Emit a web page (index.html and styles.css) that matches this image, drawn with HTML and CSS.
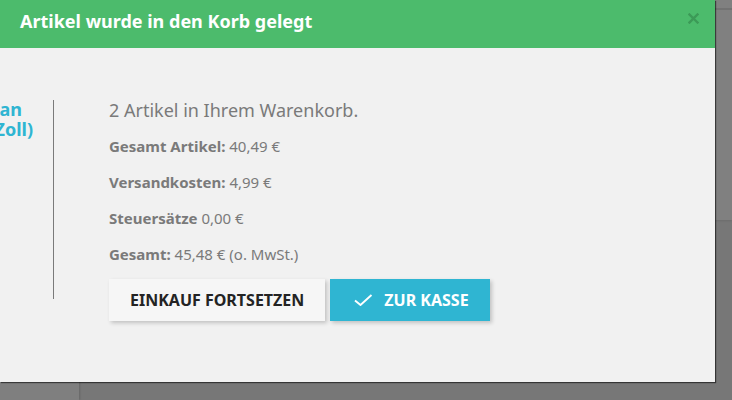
FILE: index.html
```html
<!DOCTYPE html>
<html lang="de">
<head>
<meta charset="utf-8">
<title>Warenkorb</title>
<link rel="stylesheet" href="styles.css">
</head>
<body>
<div class="page">
  <aside class="page-side"></aside>
  <div class="page-main">
    <div class="page-top"><div class="page-top-line"></div></div>
  </div>
</div>

<div class="modal">
  <div class="modal-header">
    <h4 class="modal-title">Artikel wurde in den Korb gelegt</h4>
    <button class="close" aria-label="Schließen">
      <svg width="11" height="11" viewBox="0 0 11 11"><path d="M1.5 1.5 L9.5 9.5 M9.5 1.5 L1.5 9.5" stroke="#3c9a57" stroke-width="2.4" stroke-linecap="square"/></svg>
    </button>
  </div>
  <div class="modal-body">
    <div class="product-col">
      <div class="product-name">
        <span class="pn-line pn-1">Kissenbezug Fuchs an</span>
        <span class="pn-line pn-2">(40 x 40 Zoll)</span>
      </div>
    </div>
    <div class="cart-content">
      <p class="cart-count">2 Artikel in Ihrem Warenkorb.</p>
      <p class="cart-line"><strong>Gesamt Artikel:</strong> 40,49 €</p>
      <p class="cart-line"><strong>Versandkosten:</strong> 4,99 €</p>
      <p class="cart-line"><strong>Steuersätze</strong> 0,00 €</p>
      <p class="cart-line"><strong>Gesamt:</strong> 45,48 € (o. MwSt.)</p>
      <div class="cart-btns">
        <button class="btn btn-secondary">Einkauf fortsetzen</button>
        <button class="btn btn-primary">
          <svg class="check" width="19" height="12" viewBox="0 0 19 12"><path d="M1 6.5 L6.5 11 L17.5 1" fill="none" stroke="#fff" stroke-width="1.9"/></svg>
          Zur Kasse
        </button>
      </div>
    </div>
  </div>
</div>
</body>
</html>
```

FILE: styles.css
```css
* { box-sizing: border-box; }
html, body { margin: 0; padding: 0; }
body {
  width: 732px;
  height: 400px;
  overflow: hidden;
  background: #777777;
  font-family: "Noto Sans", "Open Sans", sans-serif;
  position: relative;
}

.page { display: flex; height: 400px; }
.page-side { width: 79px; background: #7f7f7f; box-shadow: 1px 0 2px rgba(0,0,0,0.15); position: relative; }
.page-main { flex: 1; }
.page-top { height: 220px; background: #808080; padding-top: 8px; box-shadow: 0 1px 2px rgba(0,0,0,0.1); }
.page-top-line { height: 2px; background: #727272; }

.modal {
  position: absolute;
  top: 0;
  left: 0;
  z-index: 10;
  width: 715px;
  height: 382px;
  background: #f1f1f1;
  box-shadow: 1px 1px 1px rgba(0,0,0,0.55);
}

.modal-header {
  height: 48px;
  background: #4cbb6c;
  display: flex;
  align-items: flex-start;
  justify-content: space-between;
  padding: 9px 16px 0 20px;
}
.modal-title {
  margin: 0;
  color: #fff;
  font-size: 18px;
  font-weight: 700;
  line-height: 24px;
}
.close {
  border: 0;
  background: none;
  padding: 0;
  margin-top: 4px;
  width: 11px;
  height: 11px;
  display: flex;
}

.modal-body {
  display: flex;
  align-items: flex-start;
  padding-top: 52px;
}

.product-col {
  width: 54px;
  height: 199px;
  border-right: 1px solid #7a7a7a;
  overflow: hidden;
  flex-shrink: 0;
}
.product-name {
  display: flex;
  flex-direction: column;
  align-items: flex-end;
  color: #2fb5d2;
  font-weight: 700;
  font-size: 18px;
  line-height: 19.5px;
}
.pn-line { white-space: nowrap; }
.pn-1 { margin-right: 31px; }
.pn-2 { margin-right: 20px; }

.cart-content {
  padding-left: 55px;
  margin-top: -2px;
  color: #7a7a7a;
}
.cart-count {
  margin: 0 0 13px;
  font-size: 18px;
  line-height: 24px;
}
.cart-line {
  margin: 0 0 14px;
  font-size: 15px;
  line-height: 22px;
}
.cart-line strong { font-weight: 700; }

.cart-btns {
  display: flex;
  gap: 5px;
  margin-top: 2px;
}
.btn {
  font-family: "Noto Sans", "Open Sans", sans-serif;
  height: 42px;
  border: 0;
  font-size: 16px;
  font-weight: 700;
  text-transform: uppercase;
  display: flex;
  align-items: center;
  box-shadow: 2px 2px 4px rgba(0,0,0,0.2);
}
.btn-secondary {
  background: #f6f6f6;
  color: #232323;
  padding: 0 21px;
}
.btn-primary {
  background: #2fb5d2;
  color: #fff;
  padding: 0 21px 0 24px;
  gap: 11px;
}
.check { display: block; }
```
